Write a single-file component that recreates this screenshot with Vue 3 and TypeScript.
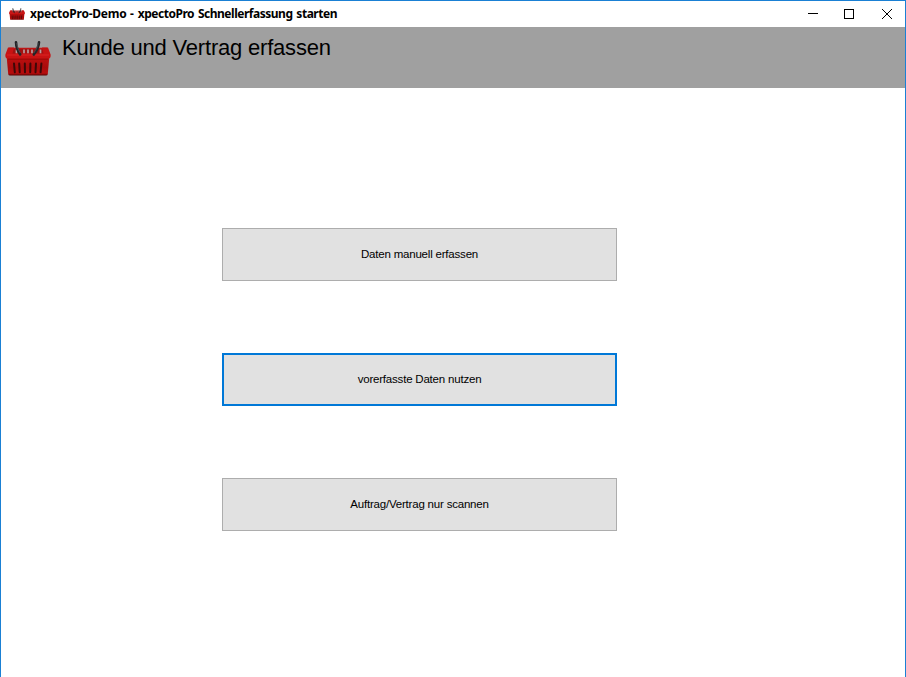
<script setup lang="ts">
import { h, ref } from 'vue'

interface Action {
  id: string
  label: string
}

const actions: Action[] = [
  { id: 'manual', label: 'Daten manuell erfassen' },
  { id: 'prefilled', label: 'vorerfasste Daten nutzen' },
  { id: 'scan', label: 'Auftrag/Vertrag nur scannen' },
]
const selected = ref('prefilled')

const slots = [9, 14.2, 19.8, 25.4, 31, 36.4]

const Basket = () =>
  h('svg', { viewBox: '0 0 46 36', preserveAspectRatio: 'none', 'aria-hidden': 'true' }, [
    h('defs', [
      h('linearGradient', { id: 'basketRed', x1: 0, y1: 0, x2: 0, y2: 1 }, [
        h('stop', { offset: '0', 'stop-color': '#c01010' }),
        h('stop', { offset: '0.6', 'stop-color': '#a80b0b' }),
        h('stop', { offset: '0.88', 'stop-color': '#b80d0d' }),
        h('stop', { offset: '1', 'stop-color': '#5a0303' }),
      ]),
    ]),
    h('path', { d: 'M4 8H42L44 15H2Z', fill: '#a01212' }),
    h('path', {
      d: 'M11.5 9.5v4M19 9.5v4M23 9.5v4M27 9.5v4M35.5 9.5v4',
      stroke: '#b89c9c', 'stroke-width': 1.7, fill: 'none',
    }),
    h('path', { d: 'M1.6 16H44.4L42.8 34Q42.6 35.5 41 35.5H5Q3.4 35.5 3.2 34Z', fill: 'url(#basketRed)' }),
    h('path', { d: 'M3 7.5H9L7.5 13.5H38.5L37 7.5H43L45.6 14.5Q46 18 44 18.6H2Q0 18 .4 14.5Z', fill: '#c81313' }),
    h('path', { d: 'M4 8.3H42', stroke: '#bd1515', 'stroke-width': 1.2, fill: 'none' }),
    h('path', { d: 'M2 15H44', stroke: '#d92424', 'stroke-width': 1.2, fill: 'none' }),
    h('path', { d: 'M3 19.2H43', stroke: '#930909', 'stroke-width': 0.8, fill: 'none' }),
    ...slots.map((x) =>
      h('path', {
        d: `M${x} 23.5L${x + (22.7 - x) * 0.06} 32.3`,
        stroke: '#3d0808', 'stroke-width': 2, 'stroke-linecap': 'round', fill: 'none',
      }),
    ),
    h('path', {
      d: 'M11 2.2C11.2 7 12.8 11 15.2 14.5M34 2.2C33.8 7 31.5 11 28.8 14.5',
      stroke: '#242427', 'stroke-width': 2.6, 'stroke-linecap': 'round', fill: 'none',
    }),
    h('path', {
      d: 'M11.8 3C12.2 7 13.5 10 15.3 13M33.1 3C32.8 7 30.8 10 28.8 13',
      stroke: '#5a5a5e', 'stroke-width': 0.7, fill: 'none',
    }),
  ])
</script>

<template>
  <div class="window">
    <header class="titlebar">
      <Basket class="app-icon" />
      <div class="caption">
        <span class="product">xpectoPro-Demo -</span>
        <span class="task">xpectoPro Schnellerfassung starten</span>
      </div>
      <div class="controls">
        <svg viewBox="0 0 10 10" shape-rendering="crispEdges"><path d="M0 4.5H10" /></svg>
        <svg viewBox="0 0 10 10" shape-rendering="crispEdges"><path d="M.5 .5H9.5V9.5H.5Z" /></svg>
        <svg viewBox="0 0 10 10"><path d="M0 0L10 10M10 0L0 10" /></svg>
      </div>
    </header>
    <section class="banner">
      <Basket class="banner-icon" />
      <h1>Kunde und Vertrag erfassen</h1>
    </section>
    <main class="actions">
      <button
        v-for="a in actions"
        :key="a.id"
        type="button"
        :class="['action', { selected: selected === a.id }]"
        @click="selected = a.id"
      >
        {{ a.label }}
      </button>
    </main>
  </div>
</template>

<style>
body {
  margin: 0;
  background: #fff;
}
</style>

<style scoped>
.window {
  box-sizing: border-box;
  width: 100%;
  height: 677px;
  display: flex;
  flex-direction: column;
  border: 1px solid #1a80d4;
  border-bottom: 0;
  background: #fff;
  color: #000;
  overflow: hidden;
}
.titlebar {
  flex: none;
  height: 26px;
  display: flex;
  align-items: center;
  padding: 0 13px 1px 8px;
  box-sizing: border-box;
}
.app-icon {
  width: 16px;
  height: 12px;
  margin-right: 5px;
}
.caption {
  display: flex;
  gap: 4px;
  font: bold 12px/16px "Noto Sans", sans-serif;
  white-space: nowrap;
  padding-top: 1px;
}
.product {
  letter-spacing: -0.22px;
  word-spacing: 0.6px;
}
.task {
  letter-spacing: -0.48px;
  word-spacing: 1.2px;
}
.controls {
  margin-left: auto;
  display: flex;
  gap: 28px;
}
.controls svg {
  width: 10px;
  height: 10px;
  fill: none;
  stroke: #000;
  stroke-width: 1;
  overflow: visible;
}
.controls svg:nth-child(2) {
  margin-left: -2px;
}
.banner {
  flex: none;
  height: 61px;
  box-sizing: border-box;
  display: flex;
  align-items: flex-start;
  background: #a0a0a0;
  padding: 9px 4px 0;
}
.banner-icon {
  width: 46px;
  height: 36px;
  margin: 4px 11px 0 0;
}
h1 {
  margin: 0;
  font: 22px/24px "Liberation Sans", Arial, sans-serif;
  letter-spacing: -0.2px;
  white-space: nowrap;
}
.actions {
  display: flex;
  flex-direction: column;
  gap: 72px;
  padding: 140px 0 0 221px;
}
.action {
  box-sizing: border-box;
  width: 395px;
  height: 53px;
  padding: 0 0 2px;
  border: 1px solid #adadad;
  border-radius: 0;
  background: #e1e1e1;
  color: #000;
  font: 11.5px/14px "Liberation Sans", Arial, sans-serif;
  letter-spacing: -0.2px;
  outline: none;
}
.action.selected {
  border: 2px solid #0078d7;
}
</style>
